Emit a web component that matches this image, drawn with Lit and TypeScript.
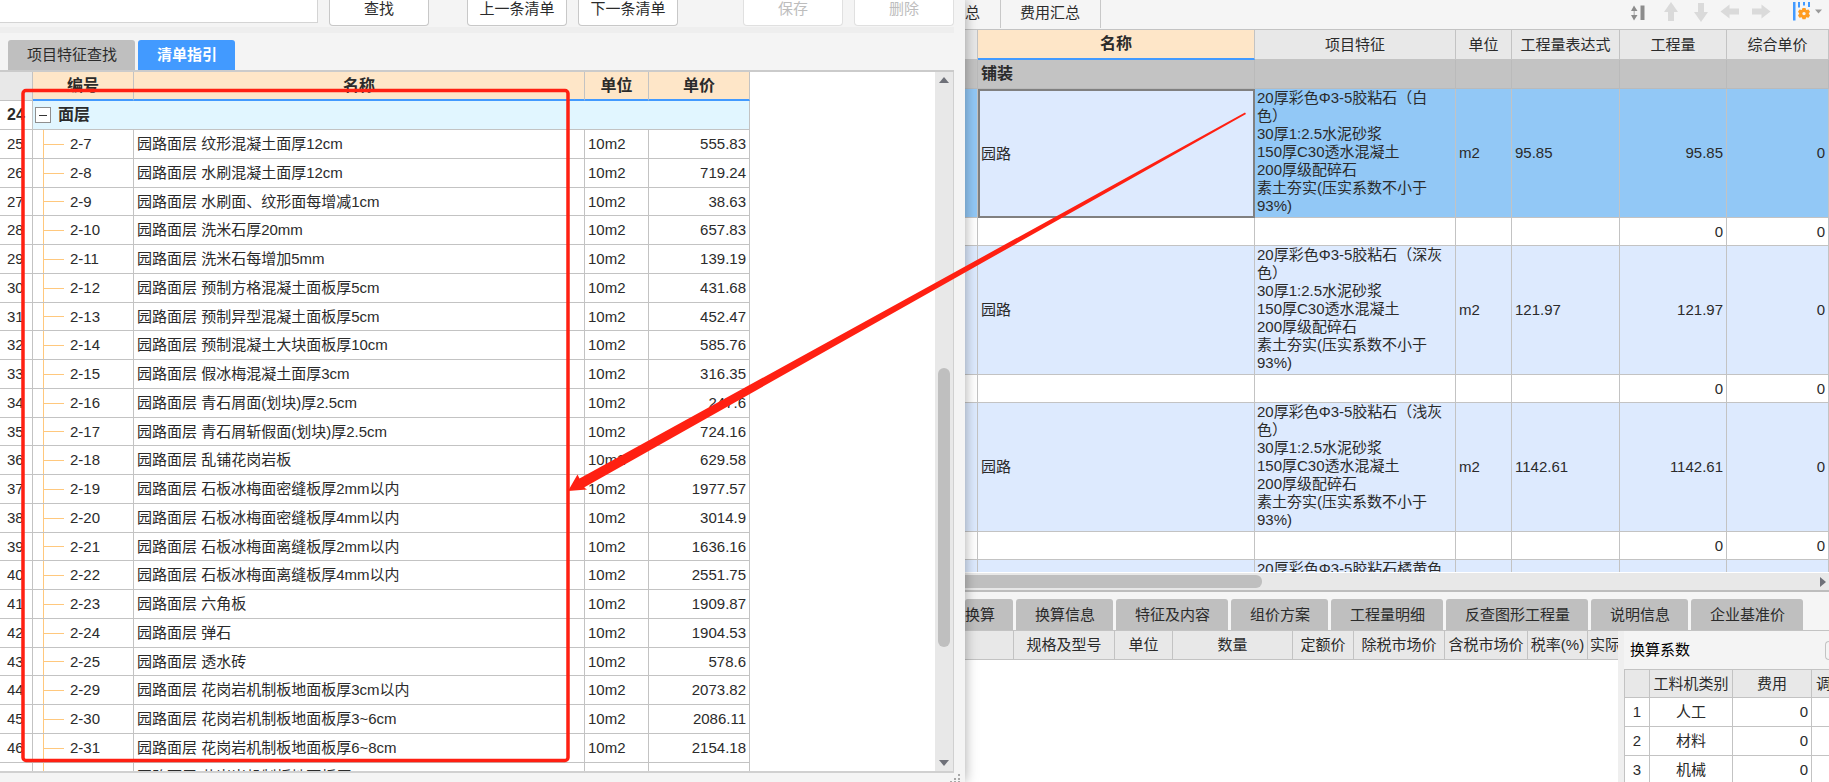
import { LitElement, html, css, svg, nothing } from "lit";
import { customElement } from "lit/decorators.js";
import { classMap } from "lit/directives/class-map.js";

type Item = [string, string, string];

const ITEMS: Item[] = [
  ["2-7", "园路面层 纹形混凝土面厚12cm", "555.83"],
  ["2-8", "园路面层 水刷混凝土面厚12cm", "719.24"],
  ["2-9", "园路面层 水刷面、纹形面每增减1cm", "38.63"],
  ["2-10", "园路面层 洗米石厚20mm", "657.83"],
  ["2-11", "园路面层 洗米石每增加5mm", "139.19"],
  ["2-12", "园路面层 预制方格混凝土面板厚5cm", "431.68"],
  ["2-13", "园路面层 预制异型混凝土面板厚5cm", "452.47"],
  ["2-14", "园路面层 预制混凝土大块面板厚10cm", "585.76"],
  ["2-15", "园路面层 假冰梅混凝土面厚3cm", "316.35"],
  ["2-16", "园路面层 青石屑面(划块)厚2.5cm", "247.6"],
  ["2-17", "园路面层 青石屑斩假面(划块)厚2.5cm", "724.16"],
  ["2-18", "园路面层 乱铺花岗岩板", "629.58"],
  ["2-19", "园路面层 石板冰梅面密缝板厚2mm以内", "1977.57"],
  ["2-20", "园路面层 石板冰梅面密缝板厚4mm以内", "3014.9"],
  ["2-21", "园路面层 石板冰梅面离缝板厚2mm以内", "1636.16"],
  ["2-22", "园路面层 石板冰梅面离缝板厚4mm以内", "2551.75"],
  ["2-23", "园路面层 六角板", "1909.87"],
  ["2-24", "园路面层 弹石", "1904.53"],
  ["2-25", "园路面层 透水砖", "578.6"],
  ["2-29", "园路面层 花岗岩机制板地面板厚3cm以内", "2073.82"],
  ["2-30", "园路面层 花岗岩机制板地面板厚3~6cm", "2086.11"],
  ["2-31", "园路面层 花岗岩机制板地面板厚6~8cm", "2154.18"],
  ["2-32", "园路面层 花岗岩机制板地面板厚8~", ""],
];

const feature = (head: string) => [
  head,
  "色）",
  "30厚1:2.5水泥砂浆",
  "150厚C30透水混凝土",
  "200厚级配碎石",
  "素土夯实(压实系数不小于",
  "93%)",
];

const BILLS = [
  { lines: feature("20厚彩色Φ3-5胶粘石（白"), qty: "95.85" },
  { lines: feature("20厚彩色Φ3-5胶粘石（深灰"), qty: "121.97" },
  { lines: feature("20厚彩色Φ3-5胶粘石（浅灰"), qty: "1142.61" },
];

const base = css`
  :host {
    font-family: "Liberation Sans", "Noto Sans CJK SC", sans-serif;
    font-size: 15px;
    line-height: 18px;
    color: #2b2b2b;
  }
  *,
  *::before,
  *::after {
    box-sizing: border-box;
  }
  button {
    font: inherit;
    color: inherit;
    border: 0;
    margin: 0;
    padding: 0;
    background: none;
    white-space: nowrap;
  }
  table {
    border-collapse: separate;
    border-spacing: 0;
    table-layout: fixed;
  }
  th,
  td {
    padding: 0 3px;
    border-right: 1px solid #c3c3c3;
    border-bottom: 1px solid #c3c3c3;
    white-space: nowrap;
    overflow: hidden;
    font-weight: 400;
    text-align: left;
  }
  th {
    text-align: center;
    background: #e8e8e8;
  }
  .num {
    text-align: right;
    padding-right: 3px;
  }
`;

@customElement("guide-dialog")
export class GuideDialog extends LitElement {
  static styles = [
    base,
    css`
      :host {
        display: flex;
        flex-direction: column;
        min-width: 0;
        min-height: 0;
        background: #f4f4f4;
        box-shadow: 0 0 12px rgba(0, 0, 0, 0.35);
        padding-right: 11px;
      }
      .search {
        display: flex;
        flex: none;
        height: 27px;
        align-items: flex-start;
      }
      .search input {
        width: 318px;
        height: 23px;
        border: 1px solid #d4d4d4;
        border-width: 0 1px 1px 0;
        background: #fff;
        outline: none;
        margin-right: 11px;
      }
      .btn {
        width: 100px;
        height: 26px;
        padding-bottom: 8px;
        background: #fff;
        border: 1px solid #c8c8c8;
        border-top: 0;
        border-radius: 0 0 4px 4px;
        margin-right: 11px;
      }
      .btn.wide {
        margin-right: 38px;
      }
      .spring {
        flex: 1;
      }
      .btn:disabled {
        color: #bdbdbd;
        border-color: #e0e0e0;
      }
      .btn:last-child {
        margin-right: 0;
      }
      .band {
        flex: none;
        height: 6px;
        background: #eee;
      }
      .tabs {
        display: flex;
        flex: none;
        gap: 3px;
        padding: 7px 0 0 8px;
        border-bottom: 2px solid #cbcbcb;
      }
      .tab {
        height: 30px;
        padding: 0 18px 0 19px;
        background: #bfbfbf;
        border-radius: 3px 3px 0 0;
      }
      .tab.on {
        background: #429aff;
        color: #fff;
        font-weight: 700;
      }
      .body {
        display: flex;
        flex: 1;
        min-height: 0;
        background: #fff;
        border-bottom: 2px solid #d0d0d0;
        border-right: 1px solid #d0d0d0;
      }
      .grid {
        flex: 1;
        min-width: 0;
        overflow: hidden;
      }
      table {
        width: 750px;
      }
      .c-no {
        width: 33px;
      }
      .c-code {
        width: 101px;
      }
      .c-unit {
        width: 64px;
      }
      .c-price {
        width: 101px;
      }
      thead th {
        height: 29px;
        background: #fee6c8;
        border-bottom: 2px solid #429aff;
        font-size: 16px;
        font-weight: 700;
      }
      thead th.corner {
        background: #e8e8e8;
        border-bottom: 1px solid #c3c3c3;
      }
      tbody td,
      tbody th {
        height: 29px;
      }
      tbody tr:nth-child(4n) > * {
        height: 28px;
      }
      .rowno {
        background: #fff;
        text-align: left;
        padding-left: 7px;
      }
      .group .rowno,
      .group td {
        font-weight: 700;
        font-size: 16px;
      }
      .group td {
        background: #e1f6ff;
        padding-left: 2px;
      }
      .title {
        display: flex;
        align-items: center;
        gap: 7px;
      }
      .toggle {
        display: flex;
        align-items: center;
        justify-content: center;
        width: 16px;
        height: 16px;
        border: 1px solid #8f8f8f;
        background: #fff;
      }
      .toggle::before {
        content: "";
        width: 8px;
        height: 1px;
        background: #333;
      }
      .code {
        padding: 0;
      }
      .branch {
        display: flex;
        align-items: center;
        height: 100%;
        margin-left: 10px;
        border-left: 1px solid #ffc87d;
        gap: 6px;
      }
      .branch::before {
        content: "";
        width: 20px;
        height: 1px;
        background: #ffc87d;
      }
      .bar {
        flex: none;
        display: flex;
        flex-direction: column;
        align-items: center;
        width: 18px;
        padding: 5px 0;
        background: #e8e8e8;
      }
      .bar svg {
        flex: none;
        width: 10px;
        height: 6px;
        fill: #6e7078;
      }
      .track {
        flex: 1;
        width: 12px;
        display: grid;
        grid-template-rows: 284fr 278fr 113fr;
      }
      .thumb {
        grid-row: 2;
        border-radius: 6px;
        background: #bfbfbf;
      }
      .foot {
        flex: none;
        display: flex;
        justify-content: flex-end;
        height: 9px;
        margin-right: -8px;
      }
      .foot svg {
        width: 12px;
        height: 9px;
        fill: #a8a8a8;
      }
    `,
  ];

  render() {
    return html`
      <div class="search">
        <input type="text" aria-label="关键字" />
        <button class="btn wide">查找</button>
        <button class="btn">上一条清单</button>
        <button class="btn">下一条清单</button>
        <span class="spring"></span>
        <button class="btn" disabled>保存</button>
        <button class="btn" disabled>删除</button>
      </div>
      <div class="band"></div>
      <div class="tabs" role="tablist">
        <button class="tab" role="tab">项目特征查找</button>
        <button class="tab on" role="tab" aria-selected="true">清单指引</button>
      </div>
      <div class="body">
        <div class="grid">
          <table>
            <colgroup>
              <col class="c-no" /><col class="c-code" /><col /><col class="c-unit" /><col class="c-price" />
            </colgroup>
            <thead>
              <tr>
                <th class="corner"></th>
                <th>编号</th>
                <th>名称</th>
                <th>单位</th>
                <th>单价</th>
              </tr>
            </thead>
            <tbody>
              <tr class="group">
                <th class="rowno">24</th>
                <td colspan="4">
                  <div class="title"><button class="toggle" aria-label="折叠"></button>面层</div>
                </td>
              </tr>
              ${ITEMS.map(
                ([code, name, price], i) => html`<tr>
                  <th class="rowno">${price ? 25 + i : nothing}</th>
                  <td class="code"><div class="branch">${price ? code : nothing}</div></td>
                  <td>${name}</td>
                  <td>${price ? "10m2" : nothing}</td>
                  <td class="num">${price}</td>
                </tr>`
              )}
            </tbody>
          </table>
        </div>
        <div class="bar">
          <svg viewBox="0 0 10 6"><path d="M5 0 10 6H0z" /></svg>
          <div class="track"><div class="thumb"></div></div>
          <svg viewBox="0 0 10 6"><path d="M5 6 10 0H0z" /></svg>
        </div>
      </div>
      <div class="foot">
        <svg viewBox="0 0 12 9">
          <path d="M8 1h2v2H8zM8 5h2v2H8zM4 5h2v2H4zM8 8h2v1H8zM4 8h2v1H4zM0 8h2v1H0z" />
        </svg>
      </div>
    `;
  }
}

@customElement("bill-panel")
export class BillPanel extends LitElement {
  static styles = [
    base,
    css`
      :host {
        display: flex;
        flex-direction: column;
        min-width: 0;
        min-height: 0;
        overflow: hidden;
        background: #fff;
      }
      .top {
        flex: none;
        display: flex;
        align-items: stretch;
        height: 29px;
        background: #f5f5f5;
      }
      .page {
        padding: 0 20px 2px 19px;
        border-right: 1px solid #c8c8c8;
        height: 28px;
      }
      .page.cut {
        padding-left: 0;
        width: 36px;
      }
      .tools {
        flex: 1;
        display: flex;
        justify-content: flex-end;
        align-items: flex-start;
      }
      .tools svg {
        display: block;
        width: 204px;
        height: 29px;
      }
      .bills {
        flex: none;
        height: 543px;
        overflow: hidden;
        border-top: 1px solid #c3c3c3;
      }
      .bills table {
        width: 100%;
      }
      .b-edge {
        width: 13px;
      }
      .b-feature {
        width: 201px;
      }
      .b-unit {
        width: 56px;
      }
      .b-expr {
        width: 108px;
      }
      .b-qty {
        width: 107px;
      }
      .b-price {
        width: 102px;
      }
      .bills th {
        height: 30px;
      }
      .bills th.hot {
        background: #fee6c8;
        border-bottom: 2px solid #429aff;
        font-weight: 700;
        font-size: 16px;
      }
      .section td {
        height: 29px;
        background: #c3c3c3;
        border-color: #bababa;
        font-weight: 700;
        font-size: 16px;
      }
      .bill td {
        height: 129px;
        background: #ddeafe;
      }
      .bill.sel td {
        background: #92c8f6;
      }
      .bill.sel td.name {
        background: #ddeafe;
        border: 2px solid #808080;
        padding-left: 1px;
      }
      .bill td.feature {
        padding: 0 2px;
        vertical-align: top;
      }
      .blank td {
        height: 28px;
      }
      .hbar {
        flex: none;
        display: flex;
        align-items: center;
        height: 20px;
        padding-right: 3px;
        background: #e8e8e8;
        border-top: 1px solid #fff;
        border-bottom: 2px solid #bdbdbd;
      }
      .hbar .htrack {
        flex: 1;
        display: grid;
        grid-template-columns: 296fr 556fr;
      }
      .hbar .hthumb {
        height: 13px;
        border-radius: 0 6px 6px 0;
        background: #bfbfbf;
      }
      .hbar svg {
        width: 6px;
        height: 10px;
        fill: #6e7078;
      }
      .tabs {
        flex: none;
        display: flex;
        gap: 3px;
        padding-top: 7px;
        height: 39px;
        background: #f5f5f5;
        border-bottom: 1px solid #c3c3c3;
      }
      .tab {
        height: 31px;
        padding: 0 18px 0 19px;
        background: #bfbfbf;
        border-radius: 3px 3px 0 0;
      }
      .tab.cut {
        padding-left: 0;
      }
      .lower {
        flex: 1;
        min-height: 0;
        display: flex;
      }
      .res {
        flex: 1;
        min-width: 0;
        overflow: hidden;
      }
      .res table {
        width: 723px;
      }
      .res th {
        height: 29px;
        padding: 0;
      }
      .res th:last-child {
        text-align: left;
        padding-left: 2px;
      }
      .r1 { width: 49px; }
      .r2 { width: 101px; }
      .r3 { width: 58px; }
      .r4 { width: 120px; }
      .r5 { width: 61px; }
      .r6 { width: 91px; }
      .r7 { width: 83px; }
      .r8 { width: 60px; }
      .factor {
        flex: none;
        width: 211px;
        overflow: hidden;
        background: #f4f4f4;
        border-left: 6px solid #efefef;
      }
      .head {
        display: flex;
        justify-content: space-between;
        align-items: center;
        height: 38px;
        padding-left: 6px;
        color: #000;
      }
      .mini {
        width: 4px;
        height: 19px;
        border: 1px solid #c3c3c3;
        border-right: 0;
        border-radius: 4px 0 0 4px;
      }
      .factor table {
        width: 288px;
        border: 1px solid #c3c3c3;
        border-width: 1px 0 0 1px;
        background: #fff;
      }
      .f1 { width: 25px; }
      .f2 { width: 83px; }
      .f3 { width: 79px; }
      .factor th,
      .factor td {
        height: 29px;
      }
      .factor thead th {
        height: 28px;
      }
      .factor thead th:last-child {
        text-align: left;
        padding-left: 4px;
      }
      .factor tbody th,
      .factor td.kind {
        background: #fff;
        text-align: center;
      }
    `,
  ];

  private icons() {
    return svg`
      <g fill="#8c8c8c">
        <path d="M6 11 9 5.500l3.500 5.500zM6 15l3 5.500 3.500-5.500z" />
        <path d="M8.500 11h1.500v4H8.500z" opacity="0.5" />
        <path d="M15.500 5.500H19.500v14.500h-4z" />
      </g>
      <g fill="#dadada">
        <path d="M46 2l7 10h-4v9h-6v-9h-4z" />
        <path d="M76 22l-7-10h4V3h6v9h4z" />
        <path d="M95.500 11.500l9-7V8.500H114v6h-9.500V18.500z" />
        <path d="M145.500 11.500l-9-7V8.500H127v6h9.500V18.500z" />
      </g>
      <path d="M168 2h2.500v18.500H168zM173 2h2v5.500h-2zM178 2h2v3.500h-2zM183 2h2v5h-2z" fill="#429aff" />
      <path fill="#ff9c22" fill-rule="evenodd"
        d="M177.500 8h3l.7 2 2.300-.6 1.500 2.300-1.300 1.800 1.300 1.900-1.500 2.400-2.300-.5-.7 2h-3l-.7-2-2.300.5-1.500-2.400 1.300-1.900-1.300-1.800 1.500-2.300 2.300.6zM179 11.900a1.700 1.700 0 1 0 0 3.400 1.700 1.700 0 0 0 0-3.400z" />
      <path d="M190 9.500h7l-3.500 4z" fill="#9a9a9a" />
    `;
  }

  render() {
    return html`
      <div class="top">
        <button class="page cut">总</button>
        <button class="page">费用汇总</button>
        <div class="tools"><svg viewBox="0 0 204 29">${this.icons()}</svg></div>
      </div>
      <div class="bills">
        <table>
          <colgroup>
            <col class="b-edge" /><col /><col class="b-feature" /><col class="b-unit" />
            <col class="b-expr" /><col class="b-qty" /><col class="b-price" />
          </colgroup>
          <thead>
            <tr>
              <th></th>
              <th class="hot">名称</th>
              <th>项目特征</th>
              <th>单位</th>
              <th>工程量表达式</th>
              <th>工程量</th>
              <th>综合单价</th>
            </tr>
          </thead>
          <tbody>
            <tr class="section">
              <td></td><td>铺装</td><td></td><td></td><td></td><td></td><td></td>
            </tr>
            ${BILLS.map(
              (b, i) => html`
                <tr class=${classMap({ bill: true, sel: i === 0 })}>
                  <td></td>
                  <td class="name">园路</td>
                  <td class="feature">${b.lines.map((l, n) => html`${n ? html`<br />` : nothing}${l}`)}</td>
                  <td>m2</td>
                  <td>${b.qty}</td>
                  <td class="num">${b.qty}</td>
                  <td class="num">0</td>
                </tr>
                <tr class="blank">
                  <td></td><td></td><td></td><td></td><td></td>
                  <td class="num">0</td>
                  <td class="num">0</td>
                </tr>
              `
            )}
            <tr class="bill">
              <td></td><td></td>
              <td class="feature">20厚彩色Φ3-5胶粘石橘黄色</td>
              <td></td><td></td><td></td><td></td>
            </tr>
          </tbody>
        </table>
      </div>
      <div class="hbar">
        <div class="htrack"><div class="hthumb"></div></div>
        <svg viewBox="0 0 6 10"><path d="M0 0 6 5 0 10z" /></svg>
      </div>
      <div class="tabs" role="tablist">
        <button class="tab cut" role="tab">换算</button>
        ${["换算信息", "特征及内容", "组价方案", "工程量明细", "反查图形工程量", "说明信息", "企业基准价"].map(
          (t) => html`<button class="tab" role="tab">${t}</button>`
        )}
      </div>
      <div class="lower">
        <div class="res">
          <table>
            <colgroup>
              <col class="r1" /><col class="r2" /><col class="r3" /><col class="r4" /><col class="r5" />
              <col class="r6" /><col class="r7" /><col class="r8" /><col />
            </colgroup>
            <thead>
              <tr>
                <th></th>
                ${["规格及型号", "单位", "数量", "定额价", "除税市场价", "含税市场价", "税率(%)", "实际"].map(
                  (t) => html`<th>${t}</th>`
                )}
              </tr>
            </thead>
          </table>
        </div>
        <div class="factor">
          <div class="head">换算系数<button class="mini" aria-label="更多"></button></div>
          <table>
            <colgroup><col class="f1" /><col class="f2" /><col class="f3" /><col /></colgroup>
            <thead>
              <tr><th></th><th>工料机类别</th><th>费用</th><th>调</th></tr>
            </thead>
            <tbody>
              ${["人工", "材料", "机械"].map(
                (k, i) => html`<tr>
                  <th>${i + 1}</th>
                  <td class="kind">${k}</td>
                  <td class="num">0</td>
                  <td></td>
                </tr>`
              )}
            </tbody>
          </table>
        </div>
      </div>
    `;
  }
}

@customElement("app-root")
export class AppRoot extends LitElement {
  static styles = css`
    :host {
      display: grid;
      grid-template-columns: 965fr 864fr;
      grid-template-rows: 100vh;
      position: relative;
      overflow: hidden;
    }
    guide-dialog {
      z-index: 1;
    }
    .marks {
      position: absolute;
      inset: 0;
      width: 100%;
      height: 100%;
      z-index: 2;
      pointer-events: none;
    }
  `;

  render() {
    return html`
      <guide-dialog></guide-dialog>
      <bill-panel></bill-panel>
      <svg class="marks" viewBox="0 0 1829 782" preserveAspectRatio="none">
        <rect x="23" y="90.500" width="545" height="670" rx="3" fill="none" stroke="#ff2012" stroke-width="3.500" />
        <path
          d="M568 491 577.500 474.500 579.500 478.500 1245 112.500 1246 114 584 487.500 587 489.500z"
          fill="#ff2012"
        />
      </svg>
    `;
  }
}
